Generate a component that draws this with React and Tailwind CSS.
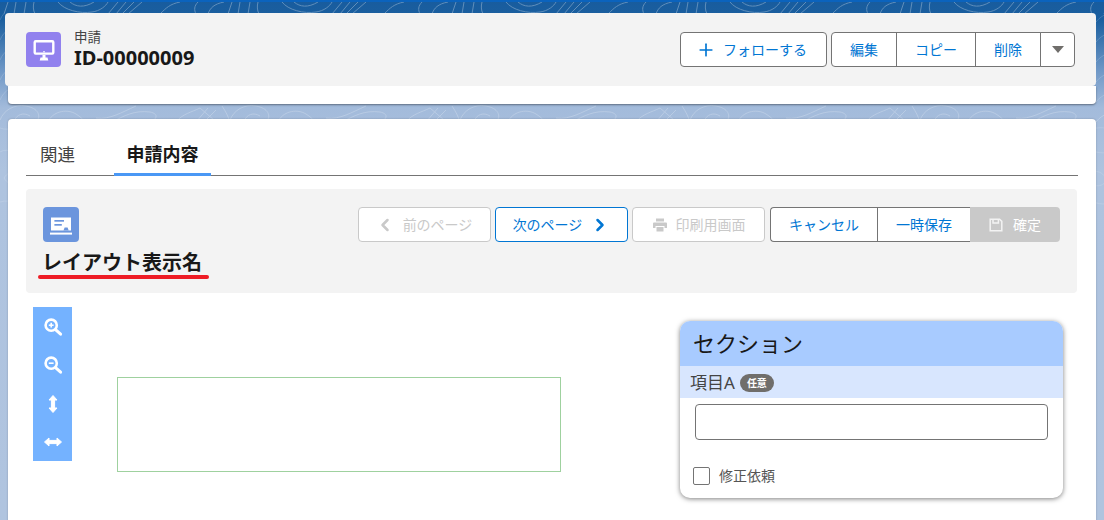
import { ChevronLeft, ChevronRight, Plus } from "lucide-react";

const font = "font-['Noto_Sans','Noto_Sans_CJK_JP',sans-serif]";

// contour lines of the page background, one tile repeated along each visible band
const Topo = () => (
  <svg className="absolute inset-0 h-full w-full" viewBox="0 0 1104 520" fill="none" stroke="#ffffff" strokeWidth="1">
    <defs>
      <pattern id="topBand" x="0" y="0" width="224" height="14" patternUnits="userSpaceOnUse">
        <path d="M8 2 L4 14 M16 2 L14 14 M26 2 L24 14 M34 2 C33 6 33 10 35 14 M58 2 C64 10 80 14 92 12 C100 11 106 6 108 2 M70 2 C76 7 84 8 94 2 M118 2 L108 14 M126 2 L116 14 M134 2 L122 14 M142 2 L128 14 M160 14 C166 8 170 4 180 2 M198 2 C194 6 194 10 196 14 M208 14 C210 8 214 4 224 2" />
      </pattern>
      <pattern id="midBand" x="0" y="102" width="230" height="20" patternUnits="userSpaceOnUse">
        <path d="M0 18 C4 8 14 2 26 4 C38 6 42 14 36 20 M14 20 C16 12 24 10 30 14 M48 20 C52 10 66 6 76 12 C82 16 84 18 84 20 M96 16 C110 18 122 10 136 4 M112 20 C124 14 134 8 150 10 C160 12 156 18 150 20 M176 20 C182 12 192 10 200 6 L214 18 M196 20 L208 6 M204 20 L216 8 M222 4 C226 10 228 14 230 20" />
      </pattern>
      <pattern id="sideBand" x="0" y="118" width="30" height="90" patternUnits="userSpaceOnUse">
        <path d="M0 10 C10 14 20 6 30 12 M0 34 C8 28 22 40 30 32 M4 60 C10 50 24 52 26 62 C24 70 10 70 4 60 M0 84 C12 80 20 90 30 84" />
      </pattern>
    </defs>
    <rect x="0" y="0" width="1104" height="14" fill="url(#topBand)" stroke="none" opacity="0.3" />
    <rect x="0" y="102" width="1104" height="20" fill="url(#midBand)" stroke="none" opacity="0.22" />
    <rect x="0" y="14" width="1104" height="88" fill="url(#midBand)" stroke="none" opacity="0.16" />
    <rect x="0" y="118" width="1104" height="90" fill="url(#sideBand)" stroke="none" opacity="0.14" />
  </svg>
);

const OutlineButton = ({ children, className = "" }) => (
  <button className={`flex h-[35px] items-center justify-center border border-[#747474] bg-white text-[14px] text-[#0176d3] ${className}`}>
    {children}
  </button>
);

const DisabledButton = ({ children, className = "" }) => (
  <button className={`flex h-[35px] w-[133px] items-center justify-center rounded border border-[#c9c9c9] bg-white text-[14px] text-[#c9c9c9] ${className}`}>
    {children}
  </button>
);

const MonitorIcon = () => (
  <svg width="24" height="24" viewBox="0 0 24 24" fill="none">
    <rect x="2.7" y="3.2" width="18.6" height="12.4" rx="1" stroke="#fff" strokeWidth="2.4" />
    <rect x="11.3" y="13" width="1.4" height="1.4" fill="#fff" />
    <path d="M10.5 17 H13.5 V19.5 H15.5 L16.3 22.5 H7.7 L8.5 19.5 H10.5 Z" fill="#fff" />
  </svg>
);

const LayoutIcon = () => (
  <svg width="24" height="24" viewBox="0 0 24 24" fill="none">
    <path d="M2 4.5 H22 V17.5 H2 Z" fill="#fff" />
    <rect x="5.4" y="7" width="9.6" height="1.7" fill="#6b95dd" />
    <rect x="5.4" y="11" width="7.4" height="1.7" fill="#6b95dd" />
    <path d="M14.5 17.5 L15.6 14.5 H18.6 L19.7 17.5 Z" fill="#6b95dd" />
    <rect x="1" y="19.6" width="22" height="2" fill="#fff" />
  </svg>
);

const PrinterIcon = () => (
  <svg width="16" height="16" viewBox="0 0 16 16" fill="#c9c9c9">
    <rect x="4" y="1.5" width="8" height="3" />
    <path d="M2 5.5 H14 A1 1 0 0 1 15 6.5 V11 H12.5 V9 H3.5 V11 H1 V6.5 A1 1 0 0 1 2 5.5 Z" />
    <rect x="4.5" y="10" width="7" height="4.5" />
  </svg>
);

const SaveIcon = () => (
  <svg width="14" height="14" viewBox="0 0 14 14" fill="none" stroke="#f3f3f3" strokeWidth="1.5">
    <path d="M1.2 1.2 V12.8 H12.8 V3.4 L10.6 1.2 Z" />
    <path d="M4 1.5 V5 H9.4 V1.5" />
  </svg>
);

const ZoomIcon = ({ minus }) => (
  <svg width="20" height="20" viewBox="0 0 20 20" fill="none" stroke="#fff">
    <circle cx="8.2" cy="8.2" r="5.6" strokeWidth="2.6" />
    <path d="M12.8 12.8 L17.6 17.2" strokeWidth="3" strokeLinecap="round" />
    <path d="M5.8 8.2 H10.6" strokeWidth="1.6" />
    {!minus && <path d="M8.2 5.8 V10.6" strokeWidth="1.6" />}
  </svg>
);

const ArrowIcon = ({ horizontal }) => (
  <svg width="20" height="20" viewBox="0 0 20 20" fill="#fff" stroke="#fff" strokeWidth="1" strokeLinejoin="round" className={horizontal ? "rotate-90" : ""}>
    <path d="M10 1.5 L14 6 H11.6 V14 H14 L10 18.5 L6 14 H8.4 V6 H6 Z" />
  </svg>
);

const App = () => {
  return (
    <div className={`relative h-[520px] w-[1104px] overflow-hidden bg-[linear-gradient(to_bottom,#185c9e_0px,#1b5f9f_20px,#6e97c6_70px,#a3bbdb_108px,#aec3df_170px,#b0c4df_520px)] ${font}`}>
      <Topo />
      <div className="relative h-[2px] bg-[#0b63bd]" />
      <div className="relative flex flex-col pt-[11px]">
        {/* HEADER */}
        <div className="z-10 ml-[5px] mr-[8px] flex h-[73px] items-center justify-between rounded-t rounded-b-sm bg-[#f3f3f3] pl-[21px] pr-[21px]">
          <div className="flex items-center gap-[13px]">
            <div className="flex h-[35px] w-[35px] items-center justify-center rounded bg-[#9181ee]">
              <MonitorIcon />
            </div>
            <div className="flex flex-col">
              <span className="text-[13.5px] leading-[17px] text-[#444444]">申請</span>
              <span className="text-[20px] font-bold leading-[24px] text-[#181818]">ID-00000009</span>
            </div>
          </div>
          <div className="flex gap-[4px]">
            <OutlineButton className="w-[147px] gap-[7px] rounded pr-[4px]">
              <Plus size={20} strokeWidth={2} />
              <span>フォローする</span>
            </OutlineButton>
            <div className="flex">
              <OutlineButton className="w-[66px] rounded-l">編集</OutlineButton>
              <OutlineButton className="-ml-px w-[80px]">コピー</OutlineButton>
              <OutlineButton className="-ml-px w-[66px]">削除</OutlineButton>
              <OutlineButton className="-ml-px w-[35px] rounded-r">
                <span className="h-0 w-0 border-x-[6px] border-t-[7px] border-x-transparent border-t-[#706e6b]" />
              </OutlineButton>
            </div>
          </div>
        </div>
        <div className="mx-[8px] h-[18px] rounded-b bg-white shadow-[0_1px_2px_rgba(0,0,0,0.4)]" />

        {/* MAIN CARD */}
        <div className="mx-[8px] mt-[15px] h-[420px] rounded bg-white px-[18px] pt-[18px] shadow-[0_0_2px_rgba(0,0,0,0.25)]">
          <div className="flex h-[39px] border-b border-[#747474] px-[14px]">
            <div className="w-[74px] pt-[6px] text-[17.5px] leading-[22px] text-[#444444]">関連</div>
            <div className="-mb-px w-[97px] border-b-[3px] border-[#4a98f5] pt-[6px] text-center text-[18px] font-bold leading-[22px] text-[#181818]">申請内容</div>
          </div>

          {/* PAGE HEADER */}
          <div className="mr-px mt-[13px] flex h-[104px] justify-between rounded bg-[#f3f3f3] pl-[17px] pr-[17px] pt-[18px]">
            <div className="flex flex-col items-start">
              <div className="flex h-[35px] w-[36px] items-center justify-center rounded bg-[#6b95dd]">
                <LayoutIcon />
              </div>
              <div className="-ml-[5px] mt-[8px] px-[4px] text-[20px] font-bold leading-[25px] text-[#181818]">レイアウト表示名</div>
              <div className="-ml-[5px] h-[4px] w-[171px] rounded-full bg-[#ee1c25]" />
            </div>
            <div className="flex">
              <div className="flex gap-[4px]">
                <DisabledButton className="gap-[8px] pr-[2px]">
                  <ChevronLeft size={20} strokeWidth={3} />
                  <span>前のページ</span>
                </DisabledButton>
                <button className="flex h-[35px] w-[133px] items-center justify-center gap-[8px] rounded border border-[#0176d3] bg-white text-[14px] text-[#0176d3]">
                  <span>次のページ</span>
                  <ChevronRight size={20} strokeWidth={3} />
                </button>
                <DisabledButton className="gap-[8px]">
                  <PrinterIcon />
                  <span>印刷用画面</span>
                </DisabledButton>
              </div>
              <div className="ml-[5px] flex">
                <OutlineButton className="w-[107px] rounded-l border-r-0">キャンセル</OutlineButton>
                <OutlineButton className="w-[94px]">一時保存</OutlineButton>
                <button className="-ml-px flex h-[35px] w-[90px] items-center justify-center gap-[10px] rounded-r bg-[#c9c9c9] text-[14px] text-white">
                  <SaveIcon />
                  <span>確定</span>
                </button>
              </div>
            </div>
          </div>

          {/* BODY */}
          <div className="flex items-start pl-[7px] pt-[14px]">
            <div className="grid h-[154px] w-[39px] grid-rows-4 place-items-center bg-[#74b2ff] pt-px">
              <ZoomIcon />
              <ZoomIcon minus />
              <ArrowIcon />
              <ArrowIcon horizontal />
            </div>
            <div className="ml-[45px] mt-[70px] h-[95px] w-[444px] border border-[#9fd19f]" />
            <div className="ml-[119px] mt-[14px] flex h-[177px] w-[383px] flex-col overflow-hidden rounded-[10px] bg-white shadow-[0_1px_5px_rgba(0,0,0,0.5)]">
              <div className="flex h-[45px] items-center bg-[#a8cbff] pl-[13px] text-[22px] text-[#181818]">セクション</div>
              <div className="flex h-[32px] items-center gap-[5px] bg-[#d8e6fe] pl-[10px] pt-px text-[17px] text-[#444444]">
                <span>項目A</span>
                <span className="w-[34px] rounded-full bg-[#706e6b] text-center text-[10px] font-bold leading-[18px] text-white">任意</span>
              </div>
              <div className="mx-[15px] mt-[6px] h-[36px] rounded border border-[#747474] bg-white" />
              <div className="mt-[25px] flex items-center gap-[9px] pl-[13px]">
                <span className="h-[18px] w-[17px] rounded-[2px] border border-[#747474]" />
                <span className="text-[14px] text-[#555555]">修正依頼</span>
              </div>
            </div>
          </div>
        </div>
      </div>
    </div>
  );
};

export default App;
